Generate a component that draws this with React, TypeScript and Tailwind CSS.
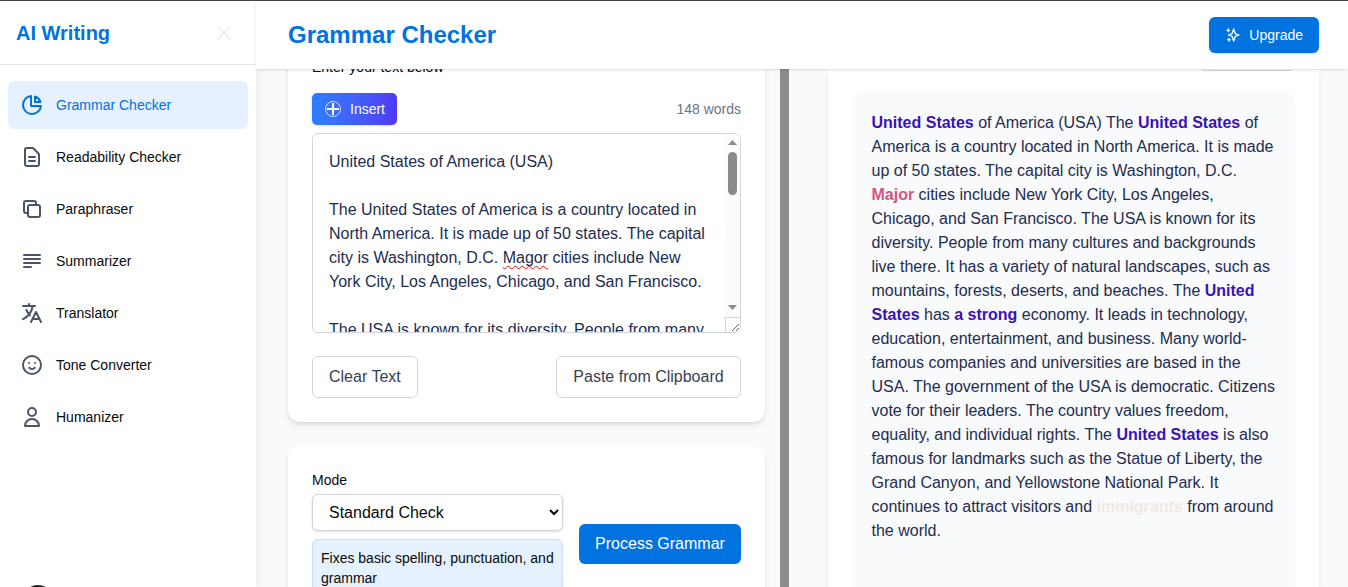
import React from "react";

const tools = [
  { name: "Grammar Checker", d: ["M11 3.055A9.001 9.001 0 1020.945 13H11V3.055z", "M20.488 9H15V3.512A9.025 9.025 0 0120.488 9z"] },
  { name: "Readability Checker", d: ["M9 12h6m-6 4h6m2 5H7a2 2 0 01-2-2V5a2 2 0 012-2h5.586a1 1 0 01.707.293l5.414 5.414a1 1 0 01.293.707V19a2 2 0 01-2 2z"] },
  { name: "Paraphraser", d: ["M8 16H6a2 2 0 01-2-2V6a2 2 0 012-2h8a2 2 0 012 2v2m-6 12h8a2 2 0 002-2v-8a2 2 0 00-2-2h-8a2 2 0 00-2 2v8a2 2 0 002 2z"] },
  { name: "Summarizer", d: ["M4 6h16M4 10h16M4 14h16M4 18h7"] },
  { name: "Translator", d: ["M3 5h12M9 3v2m1.048 9.5A18.022 18.022 0 016.412 9m6.088 9h7M11 21l5-10 5 10M12.751 5C11.783 10.77 8.07 15.61 3 18.129"] },
  { name: "Tone Converter", d: ["M14.828 14.828a4 4 0 01-5.656 0M9 10h.01M15 10h.01M21 12a9 9 0 11-18 0 9 9 0 0118 0z"] },
  { name: "Humanizer", d: ["M16 7a4 4 0 11-8 0 4 4 0 018 0zM12 14a7 7 0 00-7 7h14a7 7 0 00-7-7z"] },
];

function Icon({ d, className }: { d: string[]; className: string }) {
  return (
    <svg className={className} viewBox="0 0 24 24" fill="none" stroke="currentColor" strokeWidth="2" strokeLinecap="round" strokeLinejoin="round">
      {d.map((p) => <path key={p} d={p} />)}
    </svg>
  );
}

function Sidebar() {
  return (
    <aside className="relative z-10 flex w-64 shrink-0 flex-col overflow-visible bg-white shadow-lg">
      <div className="flex h-16 shrink-0 items-center justify-between border-b border-gray-200 pr-5 pl-4">
        <h2 className="text-xl font-bold text-[#0073e1]">AI Writing</h2>
        <Icon className="size-6 text-[#ededee]" d={["M6 18L18 6M6 6l12 12"]} />
      </div>
      <nav className="flex flex-col gap-1 px-2 pt-4">
        {tools.map((t, i) => (
          <a key={t.name} className={i === 0 ? "flex h-12 items-center gap-3 rounded-md bg-[#e5f1ff] px-3 text-sm text-[#0073e1]" : "flex h-12 items-center gap-3 rounded-md px-3 text-sm text-[#0a0a0a]"}>
            <Icon className={i === 0 ? "size-6" : "size-6 text-[#4a5565]"} d={t.d} />
            {t.name}
          </a>
        ))}
      </nav>
      <div className="mt-auto flex h-[2px] justify-start overflow-hidden pl-[22px]">
        <div className="size-8 shrink-0 rounded-full bg-[#222]" />
      </div>
    </aside>
  );
}

function Header() {
  return (
    <header className="relative z-20 flex h-[68px] shrink-0 items-center justify-between bg-white pr-[29px] pl-8 shadow">
      <h1 className="text-2xl font-bold text-[#0073e1]">Grammar Checker</h1>
      <button className="flex h-9 items-center rounded-md bg-[#0073e1] px-4 text-sm font-medium text-white shadow-sm">
        <Icon className="mr-2 size-4" d={["M5 3v4M3 5h4M6 17v4m-2-2h4m5-16l2.286 6.857L21 12l-5.714 2.143L13 21l-2.286-6.857L5 12l5.714-2.143L13 3z"]} />
        Upgrade
      </button>
    </header>
  );
}

function Editor() {
  return (
    <div className="mt-2 flex h-[200px] overflow-hidden rounded-md border border-gray-300 text-base leading-6 text-[#1d2d50]">
      <div className="min-w-0 flex-1 overflow-hidden py-4 pl-4 whitespace-nowrap">
        <p>United States of America (USA)</p>
        <p className="mt-6">
          The United States of America is a country located in<br />
          North America. It is made up of 50 states. The capital<br />
          city is Washington, D.C. <span className="underline decoration-[#ff0000] decoration-wavy decoration-[1.3px] underline-offset-2 [text-decoration-skip-ink:none]">Magor</span> cities include New<br />
          York City, Los Angeles, Chicago, and San Francisco.
        </p>
        <p className="mt-6">The USA is known for its diversity. People from many</p>
      </div>
      <div className="flex w-[15px] shrink-0 flex-col items-center bg-[#fcfcfc]">
        <svg className="mt-[6px] h-[5px] w-[9px]" viewBox="0 0 9 5"><path d="M0 5L4.5 0L9 5Z" fill="#8b8b8b" /></svg>
        <div className="mt-[7px] h-[43px] w-[9px] rounded-full bg-[#8b8b8b]" />
        <svg className="mt-auto mb-[7px] h-[5px] w-[9px]" viewBox="0 0 9 5"><path d="M0 0L4.5 5L9 0Z" fill="#8b8b8b" /></svg>
        <div className="flex h-[15px] w-[15px] items-end justify-end border-t border-l border-gray-300 bg-white">
          <svg className="size-[9px]" viewBox="0 0 9 9" stroke="#555" strokeWidth="0.9"><path d="M1 8L8 1M5 8L8 5" /></svg>
        </div>
      </div>
    </div>
  );
}

function InputCard() {
  return (
    <section className="-mt-5 rounded-xl bg-white px-6 pt-2 pb-6 shadow-md">
      <p className="text-sm leading-5 text-[#0a0a0a]">Enter your text below</p>
      <div className="mt-4 flex items-center justify-between">
        <button className="flex h-8 items-center gap-2 rounded-[5px] bg-linear-to-r from-[#2b7fff] to-[#4f39f6] px-3 text-sm font-medium text-white shadow-sm">
          <svg className="size-[18px]" viewBox="0 0 18 18" fill="none" stroke="white">
            <circle cx="9" cy="9" r="7.5" strokeWidth="1" opacity="0.75" />
            <path d="M9 3v12M3 9h12" strokeWidth="2" />
          </svg>
          Insert
        </button>
        <span className="text-sm text-[#6a7282]">148 words</span>
      </div>
      <Editor />
      <div className="mt-[23px] flex justify-between text-base text-[#364153]">
        <button className="h-[42px] rounded-md border border-gray-300 px-4">Clear Text</button>
        <button className="h-[42px] w-[185px] rounded-md border border-gray-300 whitespace-nowrap">Paste from Clipboard</button>
      </div>
    </section>
  );
}

function ModeCard() {
  return (
    <section className="mt-6 flex h-[220px] shrink-0 gap-4 rounded-xl bg-white p-6 text-[#0a0a0a] shadow-md">
      <div className="w-[251px]">
        <label className="block text-sm leading-5">Mode</label>
        <select className="mt-1 block h-[37px] w-full rounded-md border border-gray-300 bg-white px-3 text-base shadow-sm">
          <option>Standard Check</option>
        </select>
        <p className="mt-2 rounded-md border border-[#c7dff8] bg-[#e5f1ff] p-2 text-sm leading-5">Fixes basic spelling, punctuation, and grammar</p>
      </div>
      <button className="mt-[54px] h-10 flex-1 rounded-md bg-[#0073e1] text-base font-medium whitespace-nowrap text-white">Process Grammar</button>
    </section>
  );
}

function Result() {
  const strong = "font-bold text-[#3a12b8]";
  return (
    <section className="ml-[39px] w-[491px] shrink-0 bg-white px-6 shadow-md">
      <div className="flex h-[2px] justify-end">
        <div className="-mt-8 h-[34px] w-24 rounded-md border border-gray-300" />
      </div>
      <div className="mt-5 h-[560px] w-[443px] rounded-xl bg-[#f9fafb] px-[19.5px] pt-5 text-base leading-6 whitespace-nowrap text-[#1d2d50]">
        <span className={strong}>United States</span> of America (USA) The <span className={strong}>United States</span> of<br />
        America is a country located in North America. It is made<br />
        up of 50 states. The capital city is Washington, D.C.<br />
        <span className="font-bold text-[#d85481]">Major</span> cities include New York City, Los Angeles,<br />
        Chicago, and San Francisco. The USA is known for its<br />
        diversity. People from many cultures and backgrounds<br />
        live there. It has a variety of natural landscapes, such as<br />
        mountains, forests, deserts, and beaches. The <span className={strong}>United</span><br />
        <span className={strong}>States</span> has <span className={strong}>a strong</span> economy. It leads in technology,<br />
        education, entertainment, and business. Many world-<br />
        famous companies and universities are based in the<br />
        USA. The government of the USA is democratic. Citizens<br />
        vote for their leaders. The country values freedom,<br />
        equality, and individual rights. The <span className={strong}>United States</span> is also<br />
        famous for landmarks such as the Statue of Liberty, the<br />
        Grand Canyon, and Yellowstone National Park. It<br />
        continues to attract visitors and <span className="font-bold text-[#f3e8e0]">immigrants</span> from around<br />
        the world.
      </div>
    </section>
  );
}

export default function App() {
  return (
    <div className="flex h-[587px] w-[1348px] flex-col overflow-hidden bg-white font-['Liberation_Sans',Arial,sans-serif]">
      <div className="h-px shrink-0 bg-[#444]" />
      <div className="flex min-h-0 flex-1">
        <Sidebar />
        <div className="relative flex min-w-0 flex-1 flex-col">
          <Header />
          <main className="flex min-h-0 flex-1 overflow-hidden bg-[#f9fafb] pl-8">
            <div className="flex w-[477px] shrink-0 flex-col">
              <InputCard />
              <ModeCard />
            </div>
            <div className="ml-[15px] w-[9px] shrink-0 bg-[#8b8b8b]" />
            <Result />
          </main>
        </div>
      </div>
    </div>
  );
}
